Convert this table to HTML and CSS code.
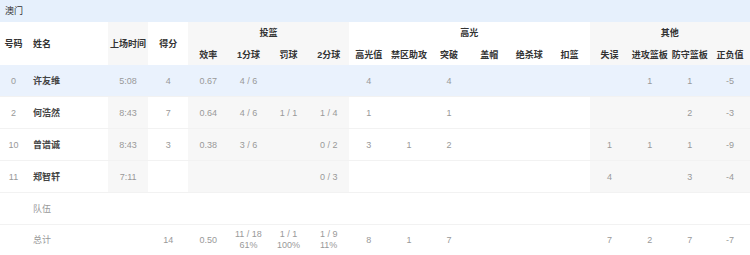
FILE: index.html
```html
<!DOCTYPE html>
<html lang="zh">
<head>
<meta charset="utf-8">
<link rel="stylesheet" href="styles.css">
</head>
<body>
<div class="team">澳门</div>
<table class="stats">
  <colgroup>
    <col class="c-no"><col class="c-name">
    <col class="c"><col class="c">
    <col class="c"><col class="c"><col class="c"><col class="c">
    <col class="c"><col class="c"><col class="c"><col class="c"><col class="c"><col class="c">
    <col class="c"><col class="c"><col class="c"><col class="c">
  </colgroup>
  <thead>
    <tr class="h1">
      <th rowspan="2">号码</th>
      <th rowspan="2" class="left">姓名</th>
      <th rowspan="2" class="g">上场时间</th>
      <th rowspan="2">得分</th>
      <th colspan="4" class="g">投篮</th>
      <th colspan="6">高光</th>
      <th colspan="4" class="g">其他</th>
    </tr>
    <tr class="h2">
      <th class="g">效率</th><th class="g">1分球</th><th class="g">罚球</th><th class="g">2分球</th>
      <th>高光值</th><th>禁区助攻</th><th>突破</th><th>盖帽</th><th>绝杀球</th><th>扣篮</th>
      <th class="g">失误</th><th class="g">进攻篮板</th><th class="g">防守篮板</th><th class="g">正负值</th>
    </tr>
  </thead>
  <tbody>
    <tr class="sel">
      <td>0</td><td class="name">许友维</td><td class="g">5:08</td><td>4</td>
      <td class="g">0.67</td><td class="g">4 / 6</td><td class="g"></td><td class="g"></td>
      <td>4</td><td></td><td>4</td><td></td><td></td><td></td>
      <td class="g"></td><td class="g">1</td><td class="g">1</td><td class="g">-5</td>
    </tr>
    <tr>
      <td>2</td><td class="name">何浩然</td><td class="g">8:43</td><td>7</td>
      <td class="g">0.64</td><td class="g">4 / 6</td><td class="g">1 / 1</td><td class="g">1 / 4</td>
      <td>1</td><td></td><td>1</td><td></td><td></td><td></td>
      <td class="g"></td><td class="g"></td><td class="g">2</td><td class="g">-3</td>
    </tr>
    <tr>
      <td>10</td><td class="name">曾谱诚</td><td class="g">8:43</td><td>3</td>
      <td class="g">0.38</td><td class="g">3 / 6</td><td class="g"></td><td class="g">0 / 2</td>
      <td>3</td><td>1</td><td>2</td><td></td><td></td><td></td>
      <td class="g">1</td><td class="g">1</td><td class="g">1</td><td class="g">-9</td>
    </tr>
    <tr>
      <td>11</td><td class="name">郑智轩</td><td class="g">7:11</td><td></td>
      <td class="g"></td><td class="g"></td><td class="g"></td><td class="g">0 / 3</td>
      <td></td><td></td><td></td><td></td><td></td><td></td>
      <td class="g">4</td><td class="g"></td><td class="g">3</td><td class="g">-4</td>
    </tr>
    <tr class="team-row">
      <td></td><td class="name muted">队伍</td><td></td><td></td>
      <td></td><td></td><td></td><td></td>
      <td></td><td></td><td></td><td></td><td></td><td></td>
      <td></td><td></td><td></td><td></td>
    </tr>
    <tr class="total">
      <td></td><td class="name muted">总计</td><td></td><td>14</td>
      <td>0.50</td><td>11 / 18<br>61%</td><td>1 / 1<br>100%</td><td>1 / 9<br>11%</td>
      <td>8</td><td>1</td><td>7</td><td></td><td></td><td></td>
      <td>7</td><td>2</td><td>7</td><td>-7</td>
    </tr>
  </tbody>
</table>
</body>
</html>
```

FILE: styles.css
```css
html, body {
  margin: 0;
  padding: 0;
  background: #ffffff;
  font-family: "Liberation Sans", "Noto Sans CJK SC", sans-serif;
}

.team {
  height: 22px;
  line-height: 22px;
  padding-left: 5px;
  background: #e6f0fc;
  font-size: 9px;
  color: #333333;
}

.stats {
  width: 750px;
  border-collapse: collapse;
  table-layout: fixed;
  font-size: 9px;
}

.c-no { width: 27px; }
.c-name { width: 81px; }
.c { width: 40.125px; }

.stats th {
  font-weight: 600;
  color: #333333;
  text-align: center;
  padding: 0;
  white-space: nowrap;
}

.stats th.left {
  text-align: left;
  padding-left: 6px;
}

.h1 { height: 21px; }
.h2 { height: 22px; }

.stats td {
  height: 31px;
  padding: 0;
  text-align: center;
  color: #999999;
  border-bottom: 1px solid #f2f2f2;
  white-space: nowrap;
}

.stats td.name {
  text-align: left;
  padding-left: 6px;
  color: #444444;
  font-weight: 600;
}

.stats td.muted {
  color: #999999;
  font-weight: 400;
}

.g { background: #f7f7f7; }

.sel td { background: #eaf2fd; }

.total td {
  height: 30px;
  line-height: 11px;
  border-bottom: none;
}
```
